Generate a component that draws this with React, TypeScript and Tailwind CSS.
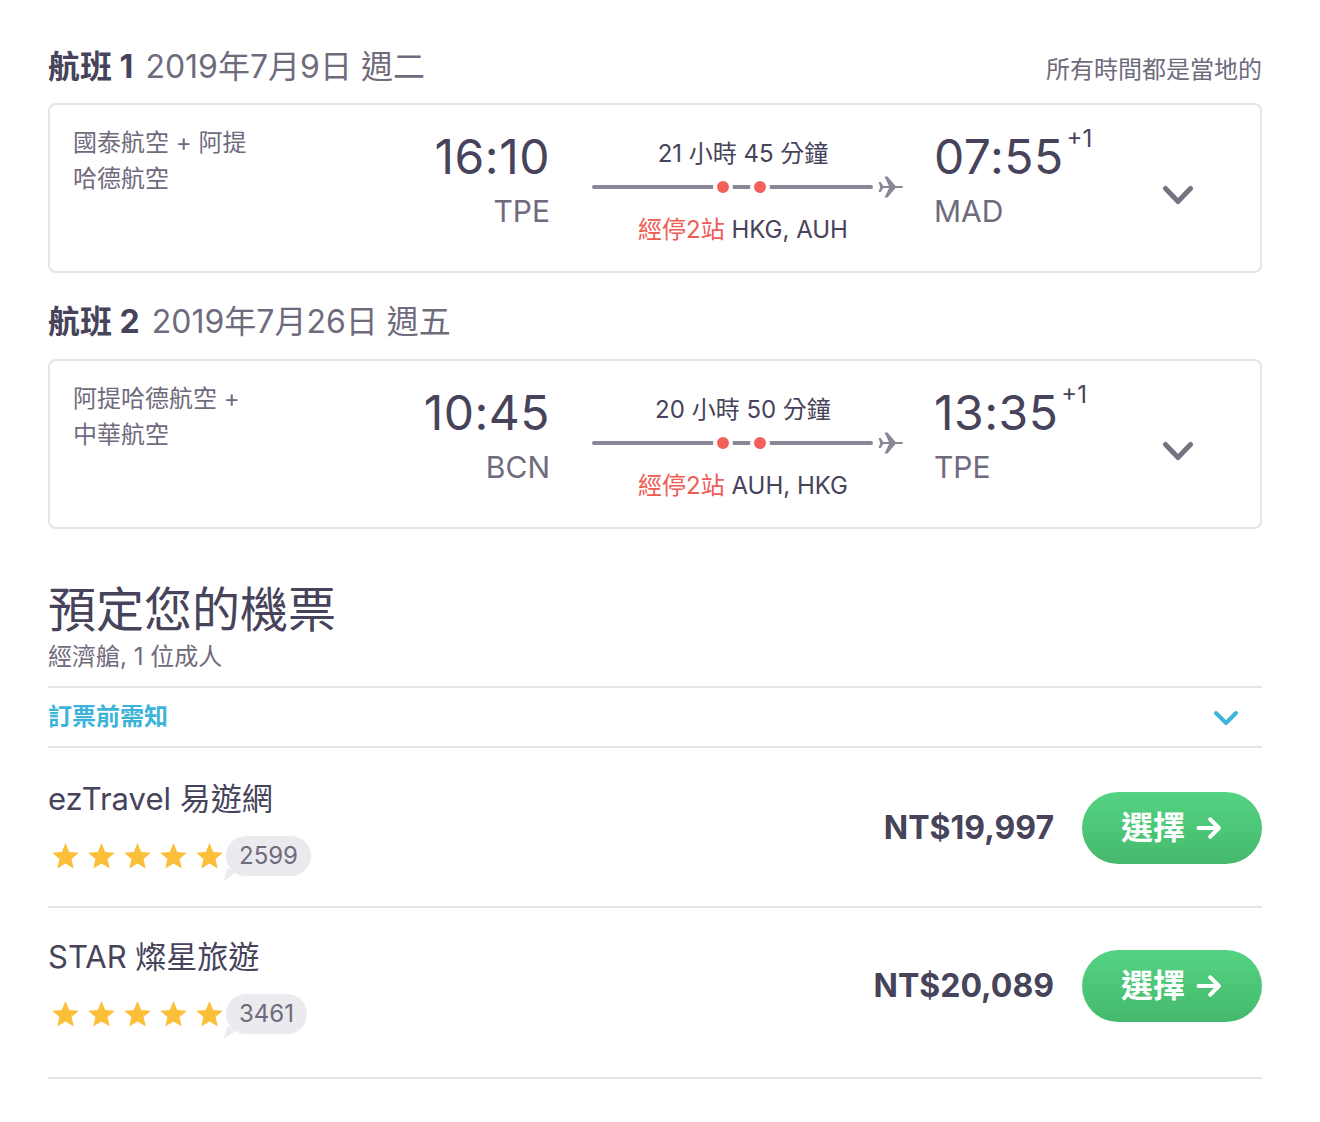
import React from "react";

const FONT = { fontFamily: 'Inter, "Noto Sans CJK TC", "Noto Sans", sans-serif' };

function Chevron({ color, w, h, sw }: { color: string; w: number; h: number; sw: number }) {
  return (
    <svg width={w} height={h} viewBox={`0 0 ${w} ${h}`} fill="none">
      <path
        d={`M${sw / 2 + 1} ${sw / 2 + 1} L${w / 2} ${h - sw / 2 - 1} L${w - sw / 2 - 1} ${sw / 2 + 1}`}
        stroke={color}
        strokeWidth={sw}
        strokeLinecap="round"
        strokeLinejoin="round"
      />
    </svg>
  );
}

function Route() {
  return (
    <svg width={302} height={24} viewBox="0 0 302 24" className="overflow-visible" fill="none">
      <line x1={2} y1={12} x2={279} y2={12} stroke="#8a8797" strokeWidth={4} strokeLinecap="round" />
      <circle cx={131} cy={12} r={8} fill="#f2605a" stroke="#fff" strokeWidth={4} />
      <circle cx={168} cy={12} r={8} fill="#f2605a" stroke="#fff" strokeWidth={4} />
      <path
        d="M288 11 L297 11 L292.5 1.5 L295.5 1.5 L303.5 11 L309.5 11 Q313 12 309.5 13 L303.5 13 L295.5 22.5 L292.5 22.5 L297 13 L288 13 Z M286.5 7 L288.8 7 L291.5 11.5 L291.5 12.5 L288.8 17 L286.5 17 L288.3 12 Z"
        fill="#8a8797"
      />
    </svg>
  );
}

function FlightCard(props: {
  airline: [string, string];
  dep: string;
  depCode: string;
  duration: string;
  stops: string;
  arr: string;
  arrCode: string;
}) {
  return (
    <div className="h-[170px] rounded-[8px] border-2 border-[#e5e4ea] flex items-start pl-[23px] pt-5">
      <div className="w-[337px] text-[24px] leading-[36px] text-[#6f6b7d]">
        <div>{props.airline[0]}</div>
        <div>{props.airline[1]}</div>
      </div>
      <div className="w-[140px] mt-2 text-right">
        <div className="text-[48px] leading-[48px] tracking-[0.5px] text-[#46435a]">{props.dep}</div>
        <div className="text-[30px] leading-[36px] mt-[12px] text-[#6f6b7d]">{props.depCode}</div>
      </div>
      <div className="w-[302px] ml-[42px] mt-[14px] flex flex-col items-center">
        <div className="text-[24px] leading-[30px] text-[#46435a]">{props.duration}</div>
        <div className="mt-[6px] self-start">
          <Route />
        </div>
        <div className="text-[24px] leading-[30px] mt-[16px] text-[#46435a]">
          <span className="text-[#ef5b55]">經停2站</span> {props.stops}
        </div>
      </div>
      <div className="w-[228px] ml-[40px] mt-2">
        <div className="flex items-start">
          <span className="text-[48px] leading-[48px] tracking-[0.5px] text-[#46435a]">{props.arr}</span>
          <span className="text-[24px] leading-[24px] -mt-[6px] ml-[3px] text-[#46435a]">+1</span>
        </div>
        <div className="text-[30px] leading-[36px] mt-[12px] text-[#6f6b7d]">{props.arrCode}</div>
      </div>
      <div className="mt-[60px]">
        <Chevron color="#76727f" w={32} h={20} sw={5} />
      </div>
    </div>
  );
}

function Star() {
  return (
    <svg width={31} height={31} viewBox="0 0 24 24">
      <path
        d="M12 1.6 L14.9 8.5 L22.3 9.1 L16.7 14 L18.4 21.3 L12 17.4 L5.6 21.3 L7.3 14 L1.7 9.1 L9.1 8.5 Z"
        fill="#fbbf3a"
      />
    </svg>
  );
}

function AgencyRow(props: { name: string; count: string; price: string; pt: string; pb: string }) {
  return (
    <div className={`flex items-center justify-between border-b-2 border-[#e5e4ea] ${props.pt} ${props.pb}`}>
      <div>
        <div className="text-[31px] leading-[38px] text-[#46435a]">{props.name}</div>
        <div className="flex items-center mt-[18px]">
          <div className="flex gap-[5px] ml-[2px]">
            <Star />
            <Star />
            <Star />
            <Star />
            <Star />
          </div>
          <div className="relative ml-[1px]">
            <div className="h-[40px] rounded-full bg-[#ebeaef] px-[13px] flex items-center text-[24px] text-[#6f6b7d] relative z-10">
              {props.count}
            </div>
            <svg className="absolute -left-[5px] bottom-[-6px]" width={16} height={16} viewBox="0 0 16 16">
              <path d="M2 15 Q5 10 6 2 L14 6 Q9 12 2 15 Z" fill="#ebeaef" />
            </svg>
          </div>
        </div>
      </div>
      <div className="flex items-center">
        <div className="text-[32px] font-bold text-[#46435a]">{props.price}</div>
        <button className="ml-[28px] w-[180px] h-[72px] rounded-full bg-gradient-to-b from-[#54d382] to-[#45b96c] text-white text-[32px] font-bold flex items-center justify-center gap-[10px]">
          <span>選擇</span>
          <svg width={28} height={28} viewBox="0 0 24 24" fill="none">
            <path d="M3 12 H20 M13 4.5 L20.5 12 L13 19.5" stroke="#fff" strokeWidth={3.4} strokeLinecap="round" strokeLinejoin="round" />
          </svg>
        </button>
      </div>
    </div>
  );
}

export default function App() {
  return (
    <div className="bg-white min-h-[1122px] w-[1320px]" style={FONT}>
      <div className="ml-[48px] w-[1214px] pt-[47px]">
        <div className="flex items-center justify-between h-[40px]">
          <div className="text-[32px] flex items-center">
            <span className="font-bold text-[#46435a]">航班 1</span>
            <span className="text-[#6f6b7d] ml-[12px]">2019年7月9日 週二</span>
          </div>
          <div className="text-[24px] text-[#6f6b7d] mt-[6px]">所有時間都是當地的</div>
        </div>
        <div className="mt-[16px]">
          <FlightCard
            airline={["國泰航空 + 阿提", "哈德航空"]}
            dep="16:10"
            depCode="TPE"
            duration="21 小時 45 分鐘"
            stops="HKG, AUH"
            arr="07:55"
            arrCode="MAD"
          />
        </div>
        <div className="mt-[29px] h-[40px] flex items-center text-[32px]">
          <span className="font-bold text-[#46435a]">航班 2</span>
          <span className="text-[#6f6b7d] ml-[12px]">2019年7月26日 週五</span>
        </div>
        <div className="mt-[17px]">
          <FlightCard
            airline={["阿提哈德航空 +", "中華航空"]}
            dep="10:45"
            depCode="BCN"
            duration="20 小時 50 分鐘"
            stops="AUH, HKG"
            arr="13:35"
            arrCode="TPE"
          />
        </div>

        <div className="mt-[52px] text-[48px] leading-[58px] text-[#46435a]">預定您的機票</div>
        <div className="mt-[3px] text-[24px] leading-[30px] text-[#6f6b7d]">經濟艙, 1 位成人</div>
        <div className="mt-[14px] border-t-2 border-[#e5e4ea]" />
        <div className="h-[60px] flex items-center justify-between border-b-2 border-[#e5e4ea]">
          <span className="text-[24px] font-bold text-[#3cb4d8]">訂票前需知</span>
          <span className="mr-[23px] mt-[2px]">
            <Chevron color="#3cb4d8" w={26} h={16} sw={4} />
          </span>
        </div>
        <AgencyRow name="ezTravel 易遊網" count="2599" price="NT$19,997" pt="pt-[32px]" pb="pb-[30px]" />
        <AgencyRow name="STAR 燦星旅遊" count="3461" price="NT$20,089" pt="pt-[30px]" pb="pb-[43px]" />
      </div>
    </div>
  );
}
